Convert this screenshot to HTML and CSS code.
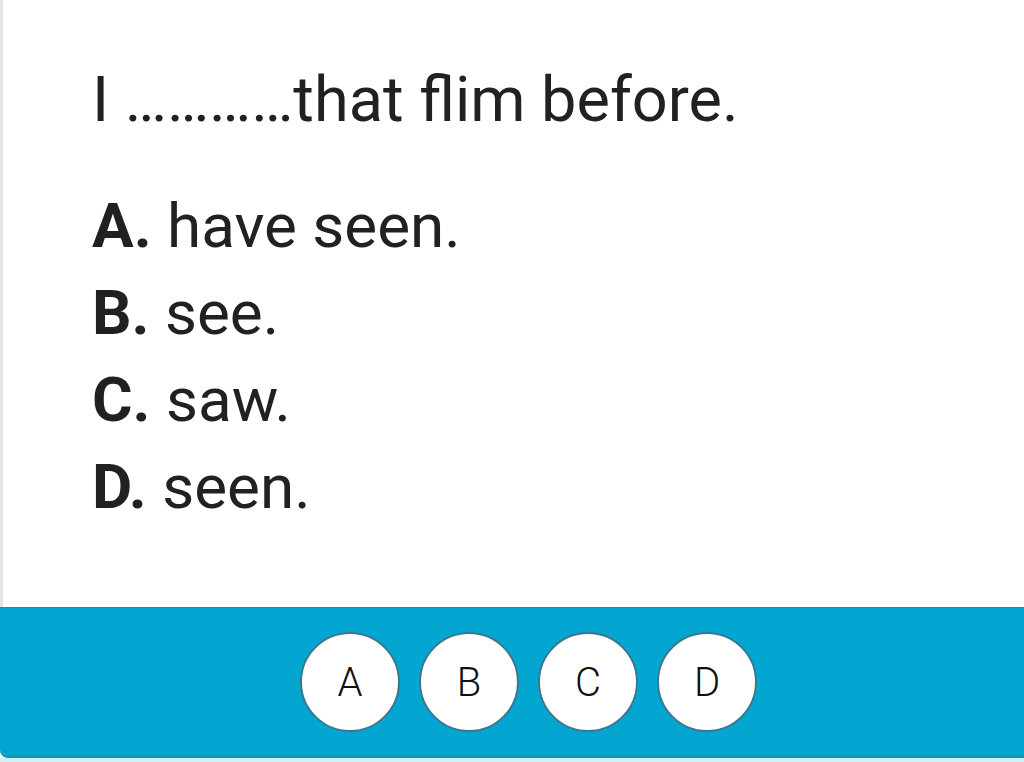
FILE: index.html
```html
<!DOCTYPE html>
<html lang="en">

<head>
    <meta charset="UTF-8">
    <meta name="viewport" content="width=device-width, initial-scale=1.0">
    <title>Quiz</title>
    <link rel="stylesheet" href="styles.css">
</head>

<body>
    <div class="quiz">
        <div class="question-box">
            <p class="question">I …………that flim before.</p>
            <ul class="options">
                <li><b>A.</b> have seen.</li>
                <li><b>B.</b> see.</li>
                <li><b>C.</b> saw.</li>
                <li><b>D.</b> seen.</li>
            </ul>
        </div>
        <div class="answer-bar">
            <button class="choice">A</button>
            <button class="choice">B</button>
            <button class="choice">C</button>
            <button class="choice">D</button>
        </div>
        <div class="bar-edge"></div>
    </div>
</body>

</html>
```

FILE: styles.css
```css
body {
    margin: 0;
    padding: 0;
    background-color: #fff;
    font-family: 'Roboto', 'Liberation Sans', sans-serif;
    color: #212121;
}

.quiz {
    width: 1024px;
    height: 762px;
    display: flex;
    flex-direction: column;
    overflow: hidden;
}

.question-box {
    height: 551px;
    padding: 56px 0 0 89px;
    border-left: 3px solid #e4e4e4;
}

.question {
    margin: 0 0 39px;
    font-size: 63px;
    line-height: 87px;
}

.options {
    list-style: none;
    margin: 0;
    padding: 0;
    font-size: 62px;
    line-height: 87px;
}

.options b {
    font-weight: 700;
}

/* barra azul con los botones */
.answer-bar {
    height: 148px;
    background-color: #02a6d0;
    border-top: 1px solid #1c8fae;
    border-bottom: 2px solid #1d8eab;
    border-bottom-left-radius: 8px;
    display: flex;
    align-items: center;
    justify-content: center;
    gap: 19px;
    padding-left: 33px;
}

.choice {
    width: 100px;
    height: 100px;
    border-radius: 50%;
    border: 2px solid #3a7890;
    background-color: #fff;
    font-family: 'Roboto', sans-serif;
    font-size: 40px;
    font-weight: 300;
    color: #111;
    padding: 0;
    cursor: pointer;
}

.bar-edge {
    flex: 1;
    background-color: #c9f3f8;
}
```
